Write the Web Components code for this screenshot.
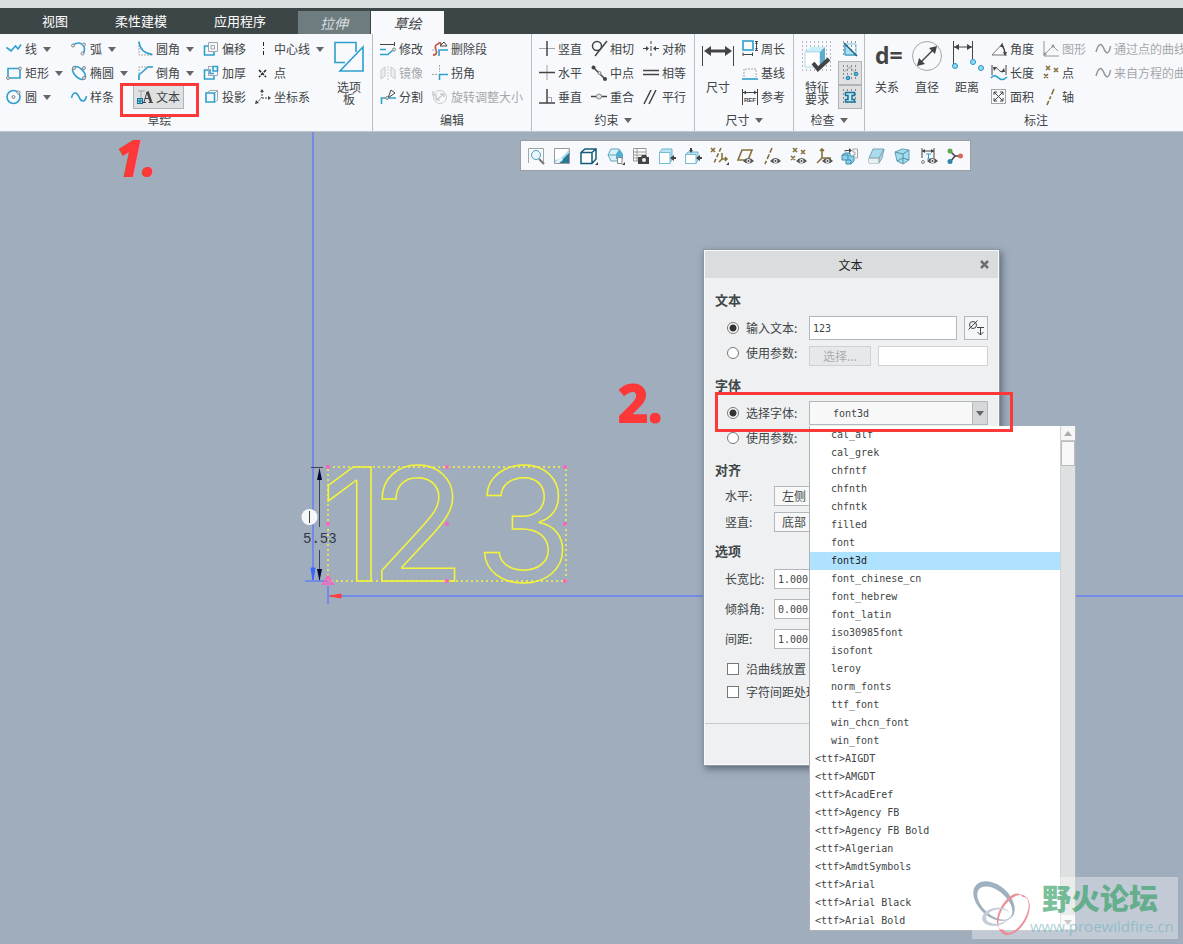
<!DOCTYPE html>
<html lang="zh-CN">
<head>
<meta charset="utf-8">
<title>草绘 - 文本</title>
<style>
html, body { margin: 0; height: 100%; }
body { font: 12px/14px "Noto Sans CJK SC", sans-serif; color: #404546; background: #a0adbd; }
</style>
</head>
<body>
<cad-app></cad-app>
<script>
const ICONS = {
  line: '<path class="b" d="M0.5 6.5L5 10L9.500 5L12 8L15 3.500"/>',
  rect: '<path class="b" d="M2 3.500H14V13H2z"/><g class="d"><circle cx="14" cy="3.500" r="1.500"/><circle cx="2" cy="13" r="1.500"/></g>',
  circle: '<circle class="b" cx="7.500" cy="8" r="6.500"/><g class="d"><circle cx="7.500" cy="8" r="1.500"/><circle cx="12.500" cy="3.500" r="1.500"/></g>',
  arc: '<path class="b" d="M2 4Q8 0 12 4Q15 8 12 13"/><g class="d"><circle cx="2" cy="4.500" r="1.500"/><circle cx="13" cy="3.500" r="1.500"/><circle cx="11.500" cy="12.500" r="1.500"/></g>',
  ellipse: '<ellipse class="b" cx="8" cy="8" rx="8" ry="4.500" transform="rotate(45 8 8)"/><g class="d"><circle cx="3" cy="3" r="1.500"/><circle cx="13" cy="3" r="1.500"/><circle cx="13" cy="13" r="1.500"/></g>',
  spline: '<path class="b" d="M0.500 9C2 2 6 3 8 8S14 14 15.500 7"/>',
  fillet: '<path class="g dash" d="M2 1V14H15"/><path class="b" d="M2 0.500Q3 12 15.500 13.500"/>',
  chamfer: '<path class="g dash" d="M2 15V2H15"/><path class="b" d="M2 15V10L11 2H16"/>',
  text: '<path class="g" d="M1 2H8M4 2V9"/><rect x="0.500" y="9.500" width="5" height="5" fill="#8fd5f5" stroke="#176f98"/><path d="M3 10V14M1 12H5" stroke="#176f98"/><path d="M10.500 2.500L14 13" fill="none" stroke="#444" stroke-width="2.500"/><path class="k" d="M10 3L7 13M8 9.500H12M5.500 13.500H9M11.500 13.500H16"/>',
  offset: '<path class="g" d="M5.500 1.500H14.500V10.500H5.500z"/><path class="b" d="M5 5H1.500V14H11V11"/><path class="g" d="M8 4.500H11.500V8H8z"/>',
  thicken: '<path class="b" d="M5 5H1.500V14H11V11"/><path class="g" d="M5.500 10.500V1.500H9M14.500 6V10.500H5.500"/><path class="b" d="M10 1.500H14.500V6H10zM8 5H7V8.500H11"/>',
  project: '<path class="g" d="M4.500 3.500L7 1.500H14.500V11L12 13.500M14 2L12 4"/><path class="b" d="M3 4H11.500V13H3z"/>',
  center: '<path d="M8.500 1V15" fill="none" stroke="#222" stroke-dasharray="4 2 1 2"/>',
  point: '<path d="M4 5L11 12M11 5L4 12" stroke="#222" stroke-width="1.500" stroke-dasharray="3 1"/>',
  csys: '<path class="k dash" d="M7 2V8L2 14M7 9H15"/><path class="f" d="M7 0L9 3H5zM16 9L13 7V11zM0 15L1 11L4 14z"/>',
  palette: '<path class="b" d="M23 11V1.500H2V21.500H12"/><path class="b" d="M30 6V30H7z"/>',
  modify: '<path class="k" d="M0 3.500H14M14.500 1V5"/><path class="b" d="M0 8.500H6M0 13.500H8L13 9"/><circle class="d" cx="14" cy="8.500" r="1.500"/>',
  mirror: '<path d="M1 5L5 2V11L1 14zM11 2L15 5V14L11 11z" fill="#e2e4e5" class="g"/><path class="g dash" d="M8 1V16"/>',
  split: '<path class="b" d="M1.500 15V9H16"/><path class="k" d="M8 9L15 4L11 1Z"/><circle class="d" cx="7" cy="9" r="1.500"/>',
  del: '<path d="M1 14Q6 14 4 9T6 3Q9 0 9 4" stroke="#c45646" fill="none" stroke-width="1.800"/><path class="b" d="M7 15V9H16"/><path class="k" d="M8 5L12 1L15 5z"/><path class="g dash" d="M0 9H6"/>',
  corner: '<path class="g dash" d="M7.500 0V7M0 9.500H6"/><path class="b" d="M7.500 15V9.500H16"/>',
  rotate: '<circle class="g" cx="8" cy="8" r="6.500"/><path class="g" d="M4 11L12 5M4 11V7M4 11H8M12 5H8M12 5V8M1 2V6H5" stroke-width="1.500"/>',
  vert: '<path class="g" d="M0 7.500H16"/><path class="k w" d="M8 0V15"/>',
  horiz: '<path class="g" d="M8 0V15"/><path class="k w" d="M0 7.500H16"/>',
  perp: '<path class="k w" d="M8 0V14M0 14H16"/><path class="g" d="M9 8.500H12.500V13"/>',
  tangent: '<circle class="k w" cx="6" cy="5" r="4.500"/><path class="k w" d="M4 15L16 0"/>',
  mid: '<path class="k w" d="M2 2L14 14"/><circle class="f" cx="2.500" cy="2.500" r="2"/><circle class="f" cx="14" cy="14" r="2"/><circle class="d" cx="8.500" cy="8" r="1.500"/>',
  coin: '<path class="k w" d="M0 7.500H16"/><circle class="d" cx="8" cy="7.500" r="2.500"/>',
  sym: '<path class="k" d="M8 0V3M8 5V10M8 12V15M0 7.500H5M11 7.500H16"/><path class="f" d="M6 7.500L3 5V10zM10 7.500L13 5V10z"/>',
  equal: '<path class="k w" d="M0 5.500H16M0 9.500H16"/>',
  para: '<path class="k w" d="M1 15L8 1M6 15L13 1"/>',
  dim: '<path class="k" d="M0.500 5V25M31.500 5V25"/><path d="M6 10H26" stroke="#444" stroke-width="3"/><path class="f" d="M2 10L9 5V15zM30 10L23 5V15z"/>',
  perim: '<rect class="b" x="1" y="0" width="10" height="9"/><path class="k" d="M14.500 0V9M13 0.500H16M13 9.500H16M1 11.500V15M10.500 11.500V15M1 13.500H10"/><path class="f" d="M14.500 1L16 3H13zM14.500 9L16 7H13z"/>',
  base: '<path class="g dash" d="M2 12V4H14V12"/><path class="b" d="M0 14H16"/>',
  ref: '<path class="k" d="M0.500 0V16M15.500 0V16M1 3.500H15"/><path class="f" d="M1 3.500L4 1.500V5.500zM15 3.500L12 1.500V5.500z"/><text x="2" y="13" font-family="Liberation Sans" font-weight="bold" font-size="6" fill="#444">REF</text>',
  feature: '<path d="M1 1H31M1 5H31M1 9H31M1 13H31M1 17H31M1 21H31M1 25H31M1 29H31" stroke="#777" stroke-dasharray="1 3"/><path d="M4 11L10 6H24L19 11z" fill="#c9eefa"/><path d="M4 11H19V26H4z" fill="#fff" stroke="#69b3ce" stroke-width=".5"/><path d="M19 11L24 6V21L19 26z" fill="#5caccc"/><path d="M12 22L17 28L28 18" fill="none" stroke="#444" stroke-width="4"/>',
  shade: '<path d="M1 1H15M1 5H15M1 9H15M1 13H15" stroke="#333" stroke-dasharray="1 3"/><path d="M3 3H14V14H3z" fill="none" stroke="#7cc5df"/><path d="M3 3V14H14z" fill="#a8dff2" stroke="#2386b0"/><path d="M2 2L15 15" stroke="#1c6381" stroke-width="1.500"/>',
  ends: '<path d="M1 1H15M1 5H15M1 9H15M1 13H15" stroke="#333" stroke-dasharray="1 3"/><path class="g" d="M2 7L8 2L14 9"/><circle cx="14" cy="9" r="1.800" fill="#46b8e2" stroke="#217ba4"/><circle cx="6" cy="13" r="1.800" fill="#46b8e2" stroke="#217ba4"/>',
  overlap: '<path d="M1 1H15M1 5H15M1 9H15M1 13H15" stroke="#333" stroke-dasharray="1 3"/><path d="M3.500 3.500H12.500V6.500H10V10.500H12.500V13H3.500V10.500H6V6.500H3.500z" fill="#bdeafa" stroke="#1c7197" stroke-width="1.500"/>',
  relation: '<text x="4" y="23" font-family="Open Sans" font-weight="bold" font-size="23" fill="#444">d=</text>',
  diam: '<circle class="g" cx="16" cy="15" r="14.500"/><path class="k w" d="M8 23L24 7"/><path class="f" d="M6 25L8 17L14 23zM26 5L24 13L18 7z"/>',
  dist: '<path class="k" d="M2.500 0V24M21.500 0V18M3 6H21"/><path class="f" d="M3 6L8 3V9zM21 6L16 3V9z"/><g fill="#8ddcfa" stroke="#2a93c0"><circle cx="4" cy="25" r="2.500"/><circle cx="22" cy="21" r="2.500"/><circle cx="30" cy="27" r="2.500"/></g>',
  angle: '<path d="M12 2L1 14H16" fill="none" stroke="#777"/><path class="k w" d="M11 5Q14 8 14 14"/><path class="f" d="M9 6L11 2L13 6zM12 11H16L14 15z"/>',
  length: '<path class="k" d="M1 0V10M15 0V10M3 3C6 0 9 10 13 6"/><path class="f" d="M2 2L6 2L3 6zM14 7L10 7L13 3z"/><path class="b" d="M0 13C4 8 7 13 9 14S14 14 16 12"/>',
  area: '<rect class="g" x="0.500" y="0.500" width="14" height="14"/><path class="k" d="M3 3L12 12M12 3L3 12M3 6V3H6M9 3H12V6M12 9V12H9M6 12H3V9"/>',
  graph: '<path class="k" d="M1 0V15H16M2 13L10 5L15 10"/><circle class="f" cx="10" cy="5" r="1.500"/><circle class="f" cx="2" cy="13" r="1.500"/>',
  points: '<path class="o" d="M3 1L7 5M7 1L3 5M11 3L15 7M15 3L11 7M1 9L5 13M5 9L1 13"/>',
  axis: '<path class="o" d="M11 0L4 16" stroke-dasharray="6 2 3 2"/>',
  curve: '<path class="k w" d="M1 11C4 0 7 3 9 8S14 14 15.500 5"/>',
  zoomfit: '<path class="g" d="M0.500 15V0.500H15.500V14"/><circle cx="8" cy="7" r="4.500" fill="#e9f8fd" stroke="#4b9fbd"/><path d="M11 11L16 16" stroke="#777" stroke-width="2"/>',
  repaint: '<path d="M.5 .5H15.500V15.500H.5z" fill="#fff" stroke="#999"/><path d="M1 12Q10 10 15 1V15H1z" fill="#a6dcee"/><path d="M5 15L15 5V15z" fill="#2a7797"/><path d="M1 15L7 9L9 12L5 15z" fill="#e6f6fb"/>',
  cube: '<path d="M1 4.500L5 1H16V11L12 15.500H1zM1 4.500H12V15.500M12 4.500L16 1" fill="#fff" stroke="#145b79" stroke-width="1.500"/><path class="f" d="M18 14V17H15z"/>',
  view: '<path d="M1 7L4 1H12L15 7L12 13H4zM1 7H15" fill="#d9f2fa" stroke="#5ba5be"/><path d="M9 6L12.500 1L16 6V11H9z" fill="#4fb0d2"/><path d="M10.500 9.500H15V15.500H10.500z" fill="#fff" stroke="#888"/><path class="f" d="M18 14V17H15z"/>',
  capture: '<path d="M.5 .5H13V13H.5zM.5 4H13M.5 7H13M.5 10H10M4 0V13" fill="#fff" stroke="#999"/><path d="M5 9H8L9 7H13L14 9H16V16H5z" fill="#444"/><circle cx="11" cy="12" r="2" fill="#eee"/>',
  box1: '<path d="M0.500 4.500L3 1H13V11L11 15.500H.5z" fill="#bce5f3" stroke="#6bb5cf"/><path d="M.5 4.500H11V15.500H.5z" fill="#fff" stroke="#75bbd2"/><path class="f" d="M11 10L15 7V9H17V11H15V13z"/>',
  box2: '<path d="M0.500 6.500L3 4H13V12L11 15.500H.5z" fill="#bce5f3" stroke="#6bb5cf"/><path d="M.5 6.500H11V15.500H.5z" fill="#fff" stroke="#75bbd2"/><path class="f" d="M11 10L15 7V9H17V11H15V13zM6 5L4 2H5V0H7V2H8z"/>',
  datum: '<path class="o" d="M0 0L4 4M4 0L0 4"/><path class="o" stroke-dasharray="4 2" d="M10 0L3 15"/><path class="o" d="M11 5V11L8 14M11 11H16M14 9L16 11L14 13"/><path class="f" d="M18 14V17H15z"/>',
  plane: '<path class="o" d="M5 2H15L11 12H1z"/>',
  axisv: '<path class="o" d="M8 0L1 16" stroke-dasharray="5 2"/>',
  pointsv: '<path class="o" d="M3 0L7 4M7 0L3 4M11 2L15 6M15 2L11 6M1 8L5 12M5 8L1 12"/>',
  csysv: '<path class="o" d="M6 1V10L1 15M6 10H15M4 3L6 1L8 3"/>',
  spin: '<path d="M0 7L3 5H8V8H12V13L9 16H4V12H0z" fill="#8fd0e6" stroke="#3d8fb0"/><path d="M0 7H6V12M4 12H9V16" fill="none" stroke="#3d8fb0"/><path class="k" d="M3 3.500V2.500H8"/><path class="f" d="M7 0L10 2.500L7 5z"/><path class="g" d="M11 1H15.500V10H13M11 1V4H13V7H11"/>',
  clear: '<path d="M1 10L5 1H16L14 10L11 15H1z" fill="#a8dcec" stroke="#7aa6b3"/><path d="M1 10H11V15H1z" fill="#e9eff1"/><path d="M1 10H11V15M11 10L16 1" fill="none" stroke="#849aa3"/>',
  section: '<path d="M1 4L8 1L15 2V12L9 16L3 13z" fill="#a4dced" stroke="#669eb3"/><path d="M1 4L9 6L15 2M9 6V16M3 13L9 10L15 12" fill="none" stroke="#4c92ab"/>',
  dimv: '<path class="k" d="M1 0V10M13 0V10M1 3H13"/><path class="f" d="M1 3L4 1V5zM13 3L10 1V5z"/><path d="M5 6H10M7.500 6V11M6 11H9" stroke="#2f9fcd"/><circle class="d" cx="2" cy="14" r="1.500"/>',
  tree: '<path class="k w" d="M3 3L8 8H14M8 8L3 14"/><circle cx="3" cy="3" r="2.500" fill="#5ca551"/><circle cx="13.500" cy="8" r="2.500" fill="#d66a60"/><circle cx="3" cy="13.500" r="2.500" fill="#3382a5"/>',
  symbol: '<circle class="k" cx="5" cy="5" r="3.500"/><path class="k" d="M0.500 9.500L9.500 0.500M9 7.500H16M12.500 7V15M9.500 12L12.500 15L15.500 12"/>'
};
const EYE = '<path d="M6 13Q11.500 7 17 13Q11.500 18 6 13z" fill="#555"/><circle cx="11.500" cy="13" r="2" fill="#fff"/><circle cx="11.500" cy="13" r="1" fill="#444"/>';
for (const n of ['plane', 'axisv', 'pointsv', 'csysv', 'dimv']) ICONS[n] += EYE;

const RESET = `*{box-sizing:border-box}
button,input,select{font:inherit;color:inherit;margin:0;padding:0;border:0;background:none;border-radius:0;outline:0}
.caret{display:inline-block;border:4px solid transparent;border-top:5px solid #666;border-bottom:0}`;

function define(name, render) {
  customElements.define(name, class extends HTMLElement {
    connectedCallback() {
      if (this.shadowRoot) return;
      this.attachShadow({ mode: 'open' }).innerHTML = render(this);
    }
  });
}

define('cad-icon', el => {
  const s = Number(el.getAttribute('size') || 16);
  return `<style>:host{display:block;flex:none;width:${s}px;height:${s}px}svg{display:block;overflow:visible}
  .b{fill:none;stroke:#2f9fcd;stroke-width:1.600}.g{stroke:#a2a6a8;fill:none}.g[fill]{fill:#e2e4e5}.k{fill:none;stroke:#444}.w{stroke-width:1.500}
  .d,.d circle{fill:#e4e6e7;stroke:#85898b}.f{fill:#444}.o{fill:none;stroke:#84703a;stroke-width:1.600}.dash{stroke-dasharray:2 1}</style>
  <svg width="${s}" height="${s}" viewBox="0 0 ${s} ${s}" aria-hidden="true">${ICONS[el.getAttribute('name')]}</svg>`;
});

/* Small ribbon command: icon, caption and an optional menu arrow. */
define('ribbon-tool', el => `<style>${RESET}
  :host{display:flex;height:24px;align-items:center}
  button{display:flex;align-items:center;gap:3px;height:24px;padding:0 4px;white-space:nowrap;border:1px solid transparent;border-width:1px 0}
  :host([active]) button{background:#dfe0e2;border:1px solid #b1b3b4;padding:0 3px}
  :host([disabled]) button{color:#a4a8aa}
  :host([disabled]) cad-icon{opacity:.55}
  .caret{margin-left:3px}</style>
  <button type="button" ${el.hasAttribute('disabled') ? 'disabled' : ''}><cad-icon name="${el.getAttribute('icon')}"></cad-icon><slot></slot>${el.hasAttribute('menu') ? '<i class="caret"></i>' : ''}</button>`);

/* Large ribbon command: 32px icon above its caption. */
define('ribbon-big', el => `<style>${RESET}
  :host{display:block;width:40px;flex:none}
  button{display:flex;flex-direction:column;align-items:center;gap:8px;width:100%;padding-top:4px;line-height:12px;text-align:center}</style>
  <button type="button"><cad-icon size="32" name="${el.getAttribute('icon')}"></cad-icon><span><slot></slot></span></button>`);

define('ribbon-toggle', el => `<style>${RESET}
  :host{display:block}button{display:grid;place-items:center;width:24px;height:24px}
  :host([pressed]) button{background:#dfe0e2;border:1px solid #b1b3b4}</style>
  <button type="button" aria-label="${el.getAttribute('label')}" aria-pressed="${el.hasAttribute('pressed')}"><cad-icon name="${el.getAttribute('icon')}"></cad-icon></button>`);

define('ribbon-group', el => `<style>${RESET}
  :host{display:flex;flex-direction:column;flex:none;padding-top:3px;border-right:1px solid #b9bfc2}
  .body{display:flex;height:72px}
  .name{display:flex;justify-content:center;align-items:center;gap:5px;height:24px;padding-right:var(--name-inset,0)}
  </style><div class="body"><slot></slot></div><div class="name">${el.getAttribute('name')}${el.hasAttribute('menu') ? '<i class="caret"></i>' : ''}</div>`);

define('ribbon-tabs', () => `<style>${RESET}
  :host{display:flex;height:26px;background:#3d4647;color:#fff;font-size:13px;padding-left:19px;align-items:flex-end}
  button{height:26px;padding:0 23px;margin-right:1px}
  .ctx{background:#6e7c80;color:#d6dcdd;font-style:italic;font-size:14px;width:72px;padding:0;margin-left:8px;height:23px}
  .on{background:#f8f9fc;color:#404546;font-style:italic;font-size:14px;width:73px;padding:0;height:23px}</style>
  <button type="button">视图</button><button type="button">柔性建模</button><button type="button">应用程序</button>
  <button type="button" class="ctx">拉伸</button><button type="button" class="on">草绘</button>`);

define('cad-ribbon', () => `<style>${RESET}
  :host{display:flex;height:98px;background:#f8f9fc;border-bottom:1px solid #bcc7ce;overflow:hidden}
  .col{display:flex;flex-direction:column;flex:none}
  .w67{width:67px}.w66{width:66px}.w55{width:55px}.w52{width:52px}.w78{width:78px}
  .g1{width:373px;--name-inset:53px}.g2{width:159px}.g3{width:163px}.g4{width:99px}.g5{width:71px}.g6{width:343px}
  .p2{padding-left:2px}.p3{padding-left:3px}.toggles{padding-left:1px}</style>
  <ribbon-group class="g1" name="草绘">
    <div class="col w67 p2"><ribbon-tool icon="line" menu>线</ribbon-tool><ribbon-tool icon="rect" menu>矩形</ribbon-tool><ribbon-tool icon="circle" menu>圆</ribbon-tool></div>
    <div class="col w66"><ribbon-tool icon="arc" menu>弧</ribbon-tool><ribbon-tool icon="ellipse" menu>椭圆</ribbon-tool><ribbon-tool icon="spline">样条</ribbon-tool></div>
    <div class="col w66"><ribbon-tool icon="fillet" menu>圆角</ribbon-tool><ribbon-tool icon="chamfer" menu>倒角</ribbon-tool><ribbon-tool icon="text" active>文本</ribbon-tool></div>
    <div class="col w52"><ribbon-tool icon="offset">偏移</ribbon-tool><ribbon-tool icon="thicken">加厚</ribbon-tool><ribbon-tool icon="project">投影</ribbon-tool></div>
    <div class="col w78"><ribbon-tool icon="center" menu>中心线</ribbon-tool><ribbon-tool icon="point">点</ribbon-tool><ribbon-tool icon="csys">坐标系</ribbon-tool></div>
    <ribbon-big icon="palette">选项<br>板</ribbon-big>
  </ribbon-group>
  <ribbon-group class="g2" name="编辑">
    <div class="col w55 p3"><ribbon-tool icon="modify">修改</ribbon-tool><ribbon-tool icon="mirror" disabled>镜像</ribbon-tool><ribbon-tool icon="split">分割</ribbon-tool></div>
    <div class="col"><ribbon-tool icon="del">删除段</ribbon-tool><ribbon-tool icon="corner">拐角</ribbon-tool><ribbon-tool icon="rotate" disabled>旋转调整大小</ribbon-tool></div>
  </ribbon-group>
  <ribbon-group class="g3" name="约束" menu>
    <div class="col w55 p3"><ribbon-tool icon="vert">竖直</ribbon-tool><ribbon-tool icon="horiz">水平</ribbon-tool><ribbon-tool icon="perp">垂直</ribbon-tool></div>
    <div class="col w52"><ribbon-tool icon="tangent">相切</ribbon-tool><ribbon-tool icon="mid">中点</ribbon-tool><ribbon-tool icon="coin">重合</ribbon-tool></div>
    <div class="col w52"><ribbon-tool icon="sym">对称</ribbon-tool><ribbon-tool icon="equal">相等</ribbon-tool><ribbon-tool icon="para">平行</ribbon-tool></div>
  </ribbon-group>
  <ribbon-group class="g4" name="尺寸" menu>
    <div class="col p3"><ribbon-big icon="dim">尺寸</ribbon-big></div>
    <div class="col"><ribbon-tool icon="perim">周长</ribbon-tool><ribbon-tool icon="base">基线</ribbon-tool><ribbon-tool icon="ref">参考</ribbon-tool></div>
  </ribbon-group>
  <ribbon-group class="g5" name="检查" menu>
    <div class="col p3"><ribbon-big icon="feature">特征<br>要求</ribbon-big></div>
    <div class="col toggles"><ribbon-toggle icon="shade" label="着色封闭环"></ribbon-toggle><ribbon-toggle icon="ends" label="突出显示开放端" pressed></ribbon-toggle><ribbon-toggle icon="overlap" label="重叠几何" pressed></ribbon-toggle></div>
  </ribbon-group>
  <ribbon-group class="g6" name="标注">
    <div class="col p2"><ribbon-big icon="relation">关系</ribbon-big></div>
    <ribbon-big icon="diam">直径</ribbon-big><ribbon-big icon="dist">距离</ribbon-big>
    <div class="col w52"><ribbon-tool icon="angle">角度</ribbon-tool><ribbon-tool icon="length">长度</ribbon-tool><ribbon-tool icon="area">面积</ribbon-tool></div>
    <div class="col w52"><ribbon-tool icon="graph" disabled>图形</ribbon-tool><ribbon-tool icon="points">点</ribbon-tool><ribbon-tool icon="axis">轴</ribbon-tool></div>
    <div class="col"><ribbon-tool icon="curve" disabled>通过点的曲线</ribbon-tool><ribbon-tool icon="curve" disabled>来自方程的曲线</ribbon-tool></div>
  </ribbon-group>`);

define('view-toolbar', () => `<style>${RESET}
  :host{display:flex;width:451px;height:31px;padding:0 2px;background:#f8f9fc;border:1px solid #9b9fa2}
  button{flex:1;display:grid;place-items:center}</style>` +
  ['zoomfit', 'repaint', 'cube', 'view', 'capture', 'box1', 'box2', 'datum', 'plane', 'axisv', 'pointsv', 'csysv', 'spin', 'clear', 'section', 'dimv', 'tree']
    .map(n => `<button type="button" aria-label="${n}"><cad-icon name="${n}"></cad-icon></button>`).join(''));

/* Sketch geometry drawn in the graphics window. */
define('sketch-view', () => `<style>:host{display:block}svg{display:block;width:100%;height:100%}
  .ax{stroke:#738ae6;stroke-width:2}.dot{stroke:#e4e45a;stroke-width:2;stroke-dasharray:2 3}
  .geo{fill:none;stroke:#f4f43a;stroke-width:1.500;font:400 157px Inter,sans-serif}</style>
  <svg>
    <path class="ax" d="M313 0V449M305 449H328M328 454V472"/><line class="ax" x1="328" y1="464" x2="100%" y2="464"/>
    <path d="M311 436H315L313 448z" fill="#3567ff" stroke="#3567ff"/><path d="M330 464L341 462V466z" fill="#ff3b3b" stroke="#ff3b3b"/>
    <path d="M311 335.500H323M319.500 337V395M319.500 418V448" stroke="#3d4358" fill="none"/>
    <path d="M319.500 336L322 348H317zM319.500 449L322 437H317z" fill="#050833"/>
    <path class="dot" fill="none" d="M328 335H566V449H328z"/>
    <text class="geo" x="321 370 475" y="449">123</text>
    <g fill="#ff5fc0"><circle cx="328" cy="335" r="2"/><circle cx="447" cy="335" r="2"/><circle cx="565" cy="335" r="2"/><circle cx="328" cy="392" r="2"/><circle cx="447" cy="392" r="2"/><circle cx="565" cy="392" r="2"/><circle cx="447" cy="449" r="2"/><circle cx="565" cy="449" r="2"/></g>
    <path d="M328 444L333 452H323zM328 446V452" fill="none" stroke="#ff5fc0" stroke-width="1.500"/>
    <circle cx="309.500" cy="385" r="8" fill="#f6f7f9"/><path d="M309.500 379V391" stroke="#444"/>
    <text x="303" y="411" font-family="Liberation Mono,monospace" font-size="14" fill="#33384a">5.53</text>
  </svg>`);

const FONTS = ['cal_alf', 'cal_grek', 'chfntf', 'chfnth', 'chfntk', 'filled', 'font', 'font3d', 'font_chinese_cn', 'font_hebrew', 'font_latin', 'iso30985font', 'isofont', 'leroy', 'norm_fonts', 'ttf_font', 'win_chcn_font', 'win_font',
  ...['AIGDT', 'AMGDT', 'AcadEref', 'Agency FB', 'Agency FB Bold', 'Algerian', 'AmdtSymbols', 'Arial', 'Arial Black', 'Arial Bold'].map(f => '<ttf>' + f)];
const esc = s => s.replace(/</g, '&lt;').replace(/>/g, '&gt;');

define('font-list', () => `<style>${RESET}
  :host{display:flex;width:267px;background:#fff;border:1px solid #aeb2b4;border-top-width:0;font:10px/18px "DejaVu Sans Mono",monospace}
  ul{flex:1;list-style:none;margin:0;padding:0}
  li{height:18px;padding-left:21px;white-space:pre}
  li.ttf{padding-left:5px}
  li[aria-selected=true]{background:#afe2ff;color:#1c2022}
  .bar{width:15px;display:flex;flex-direction:column;background:#dee1e2;border-left:1px solid #d0d3d4}
  .bar b{display:grid;place-items:center;height:15px;background:#f6f6f6;border-bottom:1px solid #c6c8c9}
  .bar i{flex:1}.bar u{height:25px;background:#f8f8f8;border:1px solid #b8bbbc}
  .up{border:4px solid transparent;border-bottom:5px solid #aaa;border-top:0}.dn{border:4px solid transparent;border-top:5px solid #aaa;border-bottom:0}</style>
  <ul role="listbox" aria-label="选择字体">${FONTS.map(f => `<li role="option" class="${f[0] === '<' ? 'ttf' : ''}" aria-selected="${f === 'font3d'}">${esc(f)}</li>`).join('')}</ul>
  <div class="bar"><b><s class="up"></s></b><u></u><i></i><b><s class="dn"></s></b></div>`);

define('text-dialog', () => `<style>${RESET}
  :host{display:block;width:295px;background:#eff0f2;border:1px solid #f8f9f9;outline:1px solid #8d969d;box-shadow:2px 3px 7px 1px rgba(50,60,75,.6)}
  header{display:flex;height:27px;align-items:center;background:#d9dddd;color:#222}
  header span{flex:1;text-align:center;padding-left:26px}
  header button{width:28px;height:27px;display:grid;place-items:center}
  main{display:flex;flex-direction:column;padding:12px 10px 20px;height:445px}
  h2{margin:0;font-size:13px;line-height:20px;font-weight:bold}
  .row{display:flex;height:24px;margin:6px 0 0 12px;align-items:center}
  .row.s{height:20px}
  .row.top{align-items:flex-start}
  .lab{display:flex;align-items:center;gap:7px;width:82px;flex:none;white-space:nowrap}
  .plain{margin-left:10px}.plain .lab{width:49px}
  .row.m3{margin-top:3px}.row.m8{margin-top:8px}.row.m10{margin-top:10px}
  input,select,.btn{border:1px solid #b4b7b9;background:#fff;height:20px}
  input[type=text]{font:10px "DejaVu Sans Mono",monospace;padding:0 3px;min-width:0}
  input[type=radio],input[type=checkbox]{appearance:none;width:12px;height:12px;border:1px solid #777;flex:none}
  input[type=radio]{border-radius:50%}
  input[type=radio]:checked{background:radial-gradient(circle,#333 0 3px,#fff 4px)}
  .btn{background:#f5f6f7}
  .sym{width:24px;margin-left:7px;padding:3px}
  .row .tall{height:24px}
  .pick{width:62px;color:#a9adaf;background:#e7e8ea;border-color:#cfd1d3;margin-right:7px}
  .val{flex:1}.faint{border-color:#d0d2d4}
  select{appearance:none;padding-left:7px;background:#f8f8f8;width:110px}
  .combo{display:flex;flex:1;position:relative;height:24px}
  .combo select{flex:1;height:24px;padding-left:23px;font:10px "DejaVu Sans Mono",monospace}
  .combo .arrow{position:absolute;right:0;top:0;width:16px;height:24px;display:grid;place-items:center;background:#d5d8d9;border:1px solid #b4b7b9;pointer-events:none}
  font-list{position:absolute;left:0;top:25px;z-index:2}
  .g9{margin-top:9px}.g12{margin-top:12px}
  footer{height:41px;border-top:1px solid #c6c8ca}</style>
  <header><span>文本</span><button type="button" aria-label="关闭"><svg width="9" height="9" viewBox="0 0 9 9"><path d="M1 1L8 8M8 1L1 8" stroke="#6c7072" stroke-width="2.500"/></svg></button></header>
  <main>
    <h2>文本</h2>
    <div class="row"><label class="lab"><input type="radio" name="src" checked>输入文本:</label><input type="text" class="val tall" value="123" aria-label="输入文本"><button type="button" class="btn sym tall" aria-label="文本符号"><cad-icon name="symbol"></cad-icon></button></div>
    <div class="row s top"><label class="lab"><input type="radio" name="src">使用参数:</label><button type="button" class="btn pick" disabled>选择...</button><input type="text" class="val faint" aria-label="参数"></div>
    <h2 class="g9">字体</h2>
    <div class="row"><label class="lab"><input type="radio" name="font" checked>选择字体:</label>
      <div class="combo"><select aria-label="选择字体">${FONTS.map(f => `<option ${f === 'font3d' ? 'selected' : ''}>${esc(f)}</option>`).join('')}</select><span class="arrow"><i class="caret"></i></span><font-list></font-list></div></div>
    <div class="row s m3"><label class="lab"><input type="radio" name="font">使用参数:</label></div>
    <h2 class="g12">对齐</h2>
    <div class="row s plain"><label class="lab" for="h">水平:</label><select id="h"><option>左侧</option></select></div>
    <div class="row s plain"><label class="lab" for="v">竖直:</label><select id="v"><option>底部</option></select></div>
    <h2 class="g9">选项</h2>
    <div class="row s plain m8"><label class="lab" for="a">长宽比:</label><input type="text" id="a" value="1.000"></div>
    <div class="row s plain m10"><label class="lab" for="b">倾斜角:</label><input type="text" id="b" value="0.000"></div>
    <div class="row s plain m10"><label class="lab" for="c">间距:</label><input type="text" id="c" value="1.000"></div>
    <div class="row s m10"><label class="lab"><input type="checkbox">沿曲线放置</label></div>
    <div class="row s m3"><label class="lab"><input type="checkbox">字符间距处理</label></div>
  </main><footer></footer>`);

define('forum-mark', () => `<style>
  :host{display:flex;width:206px;height:62px;background:rgba(255,255,255,.36);pointer-events:none}
  svg{flex:none;width:58px;height:62px;overflow:visible}
  div{display:flex;flex-direction:column;white-space:nowrap}
  b{font:900 29px/40px "Noto Sans CJK SC",sans-serif;color:rgba(52,160,104,.68);padding-left:12px}
  span{font:15px/18px "Open Sans",sans-serif;color:rgba(110,180,190,.6)}</style>
  <svg viewBox="0 0 58 62"><g fill-rule="evenodd"><path transform="rotate(42 22 24)" fill="#9fb0bf" d="M-2 24A23 15 0 1 1 46 24A23 15 0 1 1 -2 24zM3 25A21 12 0 1 0 45 25A21 12 0 1 0 3 25z"/><path transform="rotate(-60 42 38)" fill="#eb8f98" d="M20 38A22 13 0 1 1 64 38A22 13 0 1 1 20 38zM24 36A20 10 0 1 0 62 36A20 10 0 1 0 24 36z"/><path transform="rotate(-10 23 40)" fill="#c5ced8" d="M10 40A14 9 0 1 1 38 40A14 9 0 1 1 10 40zM14 40A12 7 0 1 0 38 40A12 7 0 1 0 14 40z"/></g></svg>
  <div><b>野火论坛</b><span>www.proewildfire.cn</span></div>`);

define('cad-app', () => `<style>${RESET}
  :host{display:flex;flex-direction:column;min-height:100vh;position:relative;overflow:hidden}
  .title{height:8px;background:#d9dfdf;flex:none}
  ribbon-tabs,cad-ribbon{flex:none}
  .stage{flex:1;min-height:800px;position:relative;background:#a0adbd}
  sketch-view{position:absolute;inset:0}
  view-toolbar{position:absolute;left:520px;top:8px}
  text-dialog{position:absolute;left:704px;top:118px}
  forum-mark{position:absolute;right:5px;bottom:5px;z-index:3}
  .box{position:absolute;border:3px solid #fc3838;z-index:4;pointer-events:none}
  .one{left:120px;top:83px;width:79px;height:34px}
  .two{left:715px;top:392px;width:298px;height:40px}
  .num{position:absolute;color:#fc3838;font:bold 52px/52px "Open Sans",sans-serif;-webkit-text-stroke:2px #fc3838}
  .n1{left:116px;top:0;font-style:italic;font-size:48px}
  .n2{left:618px;top:244px}</style>
  <div class="title"></div><ribbon-tabs></ribbon-tabs><cad-ribbon></cad-ribbon>
  <div class="stage"><sketch-view></sketch-view><view-toolbar></view-toolbar>
    <span class="num n1">1.</span><span class="num n2">2.</span>
    <text-dialog></text-dialog><forum-mark></forum-mark></div>
  <div class="box one"></div><div class="box two"></div>`);
</script>
</body>
</html>
